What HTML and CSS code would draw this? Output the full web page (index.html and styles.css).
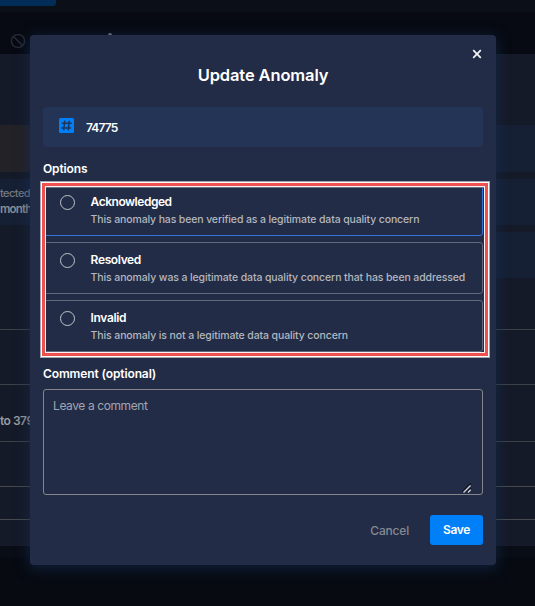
FILE: index.html
```html
<!DOCTYPE html>
<html lang="en">
<head>
<meta charset="utf-8">
<title>Update Anomaly</title>
<link rel="stylesheet" href="styles.css">
</head>
<body>
<div class="page">
  <div class="topbar"><div class="tab"></div></div>
  <div class="toolbar">
    <svg class="ban" viewBox="0 0 16 16"><circle cx="8" cy="8" r="6.6"/><path d="M3.4 3.4l9.2 9.2"/></svg>
    <span class="tip"></span>
  </div>
  <div class="content">
    <div class="cards">
      <div class="card warn"></div><div class="card"></div>
      <div class="card detected"><span>tected</span><b>month</b></div><div class="card"></div>
      <div></div><div class="card"></div>
    </div>
    <div class="row r1"></div>
    <div class="row r2">to 379</div>
    <div class="row r3"></div>
    <div class="row r4"></div>
    <div class="row r5"></div>
  </div>
  <div class="shade"></div>
</div>

<main class="modal">
  <svg class="close" viewBox="0 0 10 10"><path d="M1.2 1.2l7.6 7.6M8.8 1.2L1.2 8.8"/></svg>
  <h1>Update Anomaly</h1>
  <div class="record">
    <svg class="hash" viewBox="0 0 15 15"><rect width="15" height="15" rx="1.5"/><path d="M5.8 2.6L4.6 12.4M10.4 2.6L9.2 12.4M3 5.2h9.8M2.2 9.9h9.8"/></svg>
    <span>74775</span>
  </div>
  <h2 class="l-options">Options</h2>
  <div class="options">
    <div class="option active"><i class="radio"></i><div><h3 class="t1">Acknowledged</h3><p class="p1">This anomaly has been verified as a legitimate data quality concern</p></div></div>
    <div class="option"><i class="radio"></i><div><h3>Resolved</h3><p>This anomaly was a legitimate data quality concern that has been addressed</p></div></div>
    <div class="option"><i class="radio"></i><div><h3>Invalid</h3><p>This anomaly is not a legitimate data quality concern</p></div></div>
    <div class="highlight"></div>
  </div>
  <h2 class="l-comment">Comment (optional)</h2>
  <div class="comment"><span>Leave a comment</span>
    <svg class="grip" viewBox="0 0 10 10"><path class="dark" d="M0 9L9 0M5 9l4-4"/><path d="M1.5 9.5l7-7M6 9.5l2.7-2.7"/></svg>
  </div>
  <div class="actions"><span class="cancel">Cancel</span><span class="save">Save</span></div>
</main>
</body>
</html>
```

FILE: styles.css
```css
* { box-sizing: border-box; }
body { margin: 0; width: 535px; height: 606px; overflow: hidden; position: relative; background: #070a11; font-family: Inter, "Liberation Sans", sans-serif; color: #fff; }
h1, h2, h3, p { margin: 0; white-space: nowrap; }
.topbar { height: 12px; background: #0b1018; }
.tab { width: 56px; height: 6px; background: #022d59; border-radius: 0 0 3px 0; }
.toolbar { height: 42px; background: #070a12; display: flex; padding: 21px 0 0 10px; }
.ban { width: 16px; height: 16px; fill: none; stroke: #252934; stroke-width: 1.5; }
.tip { width: 4px; height: 3px; border-radius: 2px 2px 0 0; background: #77777b; margin-left: 82px; }
.content { height: 492px; background: #151a28; padding-top: 71px; }
.cards { display: grid; grid-template-columns: 50% 50%; grid-template-rows: 47px 46px 46px; row-gap: 7px; height: 204px; }
.card { background: #162034; }
.card.warn { background: #232227; }
.detected { color: #747983; font-size: 11px; font-weight: 500; line-height: 15px; padding-top: 7px; display: flex; flex-direction: column; letter-spacing: -0.55px; }
.detected b { color: #8a8e96; font-size: 11.5px; font-weight: 600; line-height: 16px; letter-spacing: -0.8px; }
.row { border-top: 1px solid #3d4149; color: #999ca1; }
.r1 { height: 55px; } .r2 { height: 57px; } .r3 { height: 45px; } .r4 { height: 33px; } .r5 { height: 27px; }
.r2 { padding-top: 28px; font-size: 12px; font-weight: 600; line-height: 16px; letter-spacing: -0.5px; }
.r4, .r5 { border-color: #484a4d; }
.shade { height: 11px; background: #090d15; }

.modal { position: absolute; left: 30px; top: 35px; width: 466px; height: 530px; padding: 0 13px; background: #232c46; border-radius: 4px; box-shadow: 0 3px 14px 1px rgba(20, 45, 82, .65); display: flex; flex-direction: column; }
.close { position: absolute; right: 14px; top: 14px; width: 10px; height: 10px; fill: none; stroke: #f5f6fa; stroke-width: 1.7; }
h1 { padding-top: 29px; height: 72px; font-size: 16.5px; line-height: 22px; font-weight: 600; letter-spacing: -0.12px; text-align: center; }
.record { height: 40px; background: #243456; border-radius: 4px; display: flex; align-items: center; padding: 0 16px; gap: 12px; font-size: 12px; font-weight: 600; letter-spacing: -0.85px; }
.hash { width: 15px; height: 15px; margin-top: -3px; }
.hash rect { fill: #0080f8; }
.hash path { fill: none; stroke: #213557; stroke-width: 1.5; }
h2 { font-size: 12px; font-weight: 600; line-height: 16px; letter-spacing: -0.12px; }
.l-options { margin-top: 14px; height: 23px; }
.options { position: relative; display: flex; flex-direction: column; gap: 6px; }
.option { height: 52px; border: 1px solid #62687b; border-radius: 3px; display: flex; padding: 10px 0 0 16px; gap: 15.6px; }
.option.active { border-color: #3675dd; }
.radio { width: 15px; height: 15px; border: 1px solid #bfc3ca; border-radius: 50%; }
h3 { font-size: 12px; font-weight: 600; line-height: 16px; letter-spacing: -0.37px; margin-top: -1px; }
.t1 { letter-spacing: -0.48px; }
.option p { font-size: 10.5px; font-weight: 500; line-height: 15px; letter-spacing: -0.115px; margin-top: 2px; color: #b3b7bf; }
.option .p1 { letter-spacing: -0.13px; }
.highlight { position: absolute; left: -3px; right: -7px; top: -3px; bottom: -6px; border: 1px solid #a0a5b0; }
.highlight::before { content: ""; position: absolute; inset: 0; border: 1px solid #fff; }
.highlight::after { content: ""; position: absolute; inset: 1px; border: 3px solid #ef5050; box-shadow: inset 0 0 0 1px #f8f2f4, inset 0 2px 0 #697080; }
.l-comment { margin-top: 14px; height: 23px; }
.comment { position: relative; height: 106px; border: 1px solid #85858a; border-radius: 3px; padding: 7px 9px; font-size: 12px; line-height: 17px; letter-spacing: -0.4px; color: #a1a5b0; }
.grip { position: absolute; right: 10px; bottom: 1px; width: 10px; height: 10px; fill: none; stroke: #d4d6da; stroke-width: 1.3; }
.grip .dark { stroke: #111722; }
.actions { margin-top: 20px; height: 30px; display: flex; justify-content: flex-end; align-items: center; gap: 21px; font-size: 12px; }
.cancel { color: #858994; font-weight: 500; letter-spacing: -0.2px; }
.save { width: 53px; height: 30px; line-height: 30px; text-align: center; background: #0080f8; border-radius: 3px; font-weight: 600; letter-spacing: -0.3px; }
```
